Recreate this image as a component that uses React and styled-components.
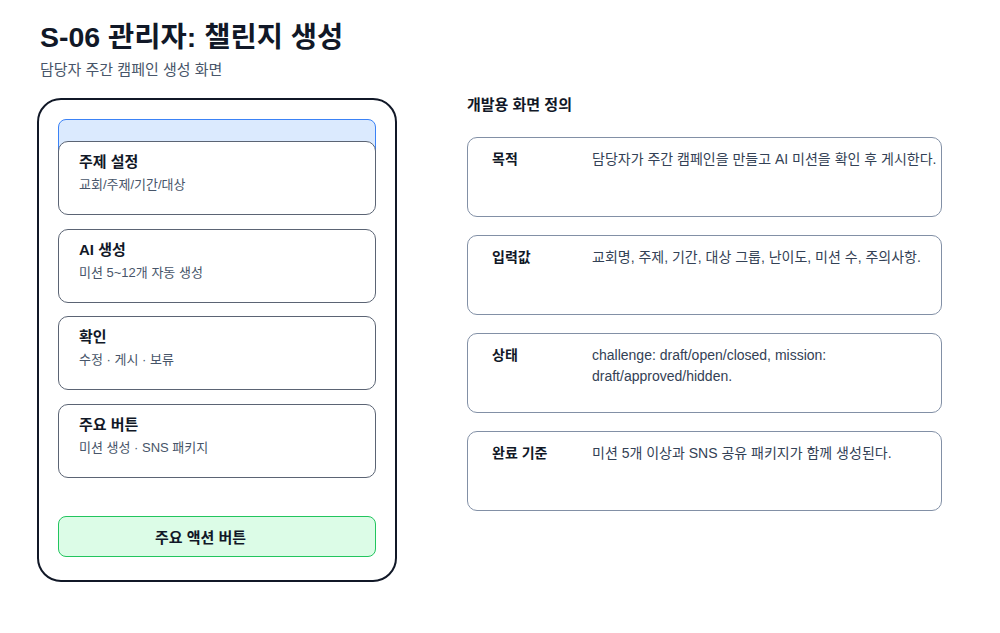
import React from 'react';
import styled, { createGlobalStyle } from 'styled-components';

const GlobalStyle = createGlobalStyle`
    body {
        margin: 0;
        background: #ffffff;
        font-family: 'Liberation Sans', 'Noto Sans CJK KR', Arial, sans-serif;
        color: #111827;
    }
`;

const Page = styled.main`
    padding: 18px 40px 0 40px;
`;

const Title = styled.h1`
    margin: 0;
    font-size: 28.5px;
    font-weight: 700;
    line-height: 38px;
    color: #111827;
`;

const Subtitle = styled.p`
    margin: 4px 0 0 0;
    font-size: 15px;
    line-height: 20px;
    color: #475569;
`;

const Columns = styled.div`
    display: flex;
    align-items: flex-start;
    gap: 70px;
    margin-top: 13px;
    margin-left: -3px;
`;

const Phone = styled.section`
    box-sizing: border-box;
    width: 360px;
    height: 484px;
    margin-top: 5px;
    border: 2px solid #111827;
    border-radius: 24px;
    padding: 19px 19px 0 19px;
    display: flex;
    flex-direction: column;
`;

const TopBar = styled.div`
    height: 40px;
    margin-bottom: -20px;
    background: #dbeafe;
    border: 1px solid #3b82f6;
    border-radius: 8px;
`;

const StepList = styled.div`
    display: flex;
    flex-direction: column;
    gap: 13.5px;
    position: relative;
`;

const StepCard = styled.div`
    box-sizing: border-box;
    height: 74px;
    padding: 9px 20px;
    background: #ffffff;
    border: 1.5px solid #5b6474;
    border-radius: 10px;
`;

const StepTitle = styled.div`
    font-size: 15px;
    font-weight: 700;
    line-height: 22px;
    color: #111827;
`;

const StepText = styled.div`
    margin-top: 3px;
    font-size: 13px;
    line-height: 18px;
    color: #475569;
`;

const ActionButton = styled.button`
    box-sizing: border-box;
    height: 41px;
    margin-top: 38px;
    padding: 0 33px 0 0;
    background: #dcfce7;
    border: 1.5px solid #22c55e;
    border-radius: 8px;
    font-family: inherit;
    font-size: 15px;
    font-weight: 700;
    color: #111827;
`;

const Spec = styled.section`
    width: 475px;
`;

const SpecHeading = styled.h2`
    margin: 0;
    font-size: 15px;
    font-weight: 700;
    line-height: 24px;
    color: #111827;
`;

const SpecList = styled.div`
    display: flex;
    flex-direction: column;
    gap: 18px;
    margin-top: 20px;
`;

const SpecRow = styled.div`
    box-sizing: border-box;
    height: 80px;
    display: grid;
    grid-template-columns: 100px 1fr;
    padding: 11px 0 0 24px;
    border: 1.5px solid #8290a6;
    border-radius: 10px;
`;

const SpecLabel = styled.div`
    font-size: 14px;
    font-weight: 700;
    line-height: 21px;
    color: #111827;
`;

const SpecValue = styled.div`
    font-size: 14px;
    line-height: 21px;
    color: #334155;
`;

const steps = [
    { title: '주제 설정', text: '교회/주제/기간/대상' },
    { title: 'AI 생성', text: '미션 5~12개 자동 생성' },
    { title: '확인', text: '수정 · 게시 · 보류' },
    { title: '주요 버튼', text: '미션 생성 · SNS 패키지' },
];

const specs = [
    { label: '목적', value: '담당자가 주간 캠페인을 만들고 AI 미션을 확인 후 게시한다.' },
    { label: '입력값', value: '교회명, 주제, 기간, 대상 그룹, 난이도, 미션 수, 주의사항.' },
    { label: '상태', value: 'challenge: draft/open/closed, mission: draft/approved/hidden.' },
    { label: '완료 기준', value: '미션 5개 이상과 SNS 공유 패키지가 함께 생성된다.' },
];

const App = () => (
    <>
        <GlobalStyle />
        <Page>
            <Title>S-06 관리자: 챌린지 생성</Title>
            <Subtitle>담당자 주간 캠페인 생성 화면</Subtitle>
            <Columns>
                <Phone>
                    <TopBar />
                    <StepList>
                        {steps.map(s => (
                            <StepCard key={s.title}>
                                <StepTitle>{s.title}</StepTitle>
                                <StepText>{s.text}</StepText>
                            </StepCard>
                        ))}
                    </StepList>
                    <ActionButton type="button">주요 액션 버튼</ActionButton>
                </Phone>
                <Spec>
                    <SpecHeading>개발용 화면 정의</SpecHeading>
                    <SpecList>
                        {specs.map(s => (
                            <SpecRow key={s.label}>
                                <SpecLabel>{s.label}</SpecLabel>
                                <SpecValue>{s.value}</SpecValue>
                            </SpecRow>
                        ))}
                    </SpecList>
                </Spec>
            </Columns>
        </Page>
    </>
);

export default App;
